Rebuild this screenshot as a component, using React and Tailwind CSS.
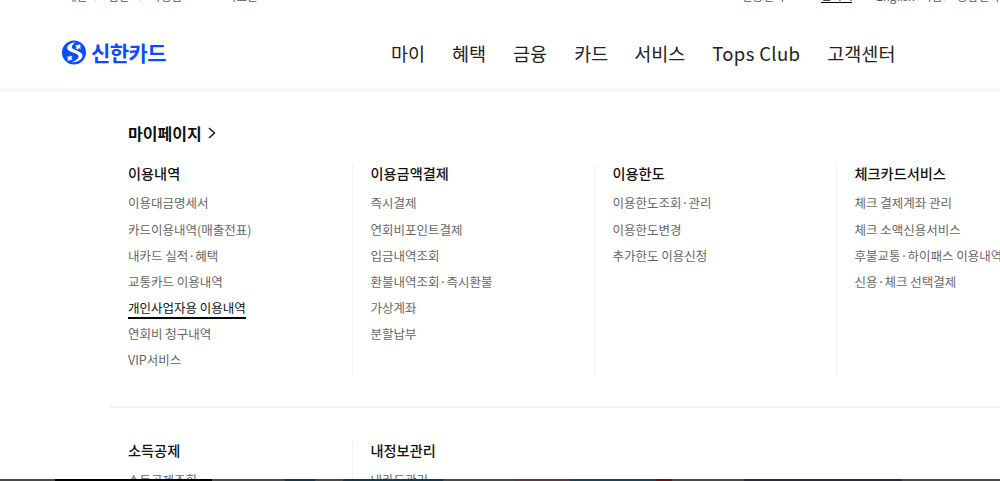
const font = { fontFamily: '"Noto Sans CJK KR", "Noto Sans", sans-serif' };

const columns = [
  { title: "이용내역", items: ["이용대금명세서", "카드이용내역(매출전표)", "내카드 실적·혜택", "교통카드 이용내역", "개인사업자용 이용내역", "연회비 청구내역", "VIP서비스"] },
  { title: "이용금액결제", items: ["즉시결제", "연회비포인트결제", "입금내역조회", "환불내역조회·즉시환불", "가상계좌", "분할납부"] },
  { title: "이용한도", items: ["이용한도조회·관리", "이용한도변경", "추가한도 이용신청"] },
  { title: "체크카드서비스", items: ["체크 결제계좌 관리", "체크 소액신용서비스", "후불교통·하이패스 이용내역", "신용·체크 선택결제"] },
];

function Column({ c, first }) {
  return (
    <div className={`w-[242px] shrink-0 h-[212px] ${first ? "pl-[18px]" : "pl-[17.5px] border-l border-[#f0f0f0]"}`}>
      <h3 className="text-[14.2px] leading-[20px] font-medium text-[#111] whitespace-nowrap -mt-[1px]">{c.title}</h3>
      <ul className="mt-[7.6px] flex flex-col">
        {c.items.map((t) => (
          <li key={t} className="h-[26.2px] flex items-center text-[12.5px] text-[#666] whitespace-nowrap">
            {t === "개인사업자용 이용내역" ? (
              <span className="text-[#111] border-b-2 border-black leading-[18px] mt-[2px]">{t}</span>
            ) : t}
          </li>
        ))}
      </ul>
    </div>
  );
}

function Logo() {
  return (
    <svg width="24" height="25" viewBox="0 0 24 25" className="shrink-0">
      <circle cx="12" cy="12.5" r="12" fill="#0a4cff" />
      <path d="M13.5 2.2C8.5 2.6 5 5 5.2 8.2c.3 4.4 11 4.3 11.3 8 .2 2.7-3.6 5-7 6 5.6.4 11-2.4 11-6.6 0-5-10.3-5.4-10.6-8.2-.2-2 1.8-4 3.6-5.2z" fill="#fff" />
      <path d="M13.6 8.2l1.2-1.3-1.6-1.5 5-1.2.4 5-1.6-1.3-1.2 1.5z" fill="#fff" />
      <path d="M10.4 16.8l-1.2 1.3 1.6 1.5-5 1.2-.4-5 1.6 1.3 1.2-1.5z" fill="#fff" />
    </svg>
  );
}

function Sep() {
  return <span className="w-px h-[12px] bg-[#ddd] self-center" />;
}

export default function App() {
  return (
    <div style={font} className="relative w-[1000px] h-[481px] overflow-hidden bg-white">
      <div className="h-[5px] overflow-hidden">
        <div className="flex justify-between pl-[66px] text-[11.5px] leading-[14px] text-[#555] -mt-[12px] whitespace-nowrap">
          <div className="flex items-center">
            <span className="w-[29px]">개인</span><Sep />
            <span className="ml-[12px] w-[32px]">법인</span><Sep />
            <span className="ml-[9px] w-[76px]">가맹점</span>
            <span>카드몰</span>
          </div>
          <div className="flex items-center w-[258px]">
            <span className="w-[64px]">인증센터</span>
            <span className="w-[15px] text-[#aaa]">◦</span>
            <span className="w-[31px] text-[#111] border-b border-black">한국어</span>
            <span className="ml-[13px]"><Sep /></span>
            <span className="ml-[11px] w-[45px]">English</span>
            <span className="w-[23px]">지점</span><Sep />
            <span className="ml-[12px]">상담센터</span>
          </div>
        </div>
      </div>

      <header className="h-[83px] flex items-center pl-[62px] pt-[12px]">
        <div className="flex items-center gap-[5px] w-[329px]">
          <Logo />
          <span className="text-[21px] font-bold text-[#0a4cff] tracking-[-0.6px] leading-none">신한카드</span>
        </div>
        <nav className="flex gap-[27px] text-[18.5px] text-[#222] whitespace-nowrap mt-[2px]">
          <span>마이</span><span>혜택</span><span>금융</span><span>카드</span><span className="-ml-[1px]">서비스</span><span className="tracking-[0.35px]">Tops Club</span><span>고객센터</span>
        </nav>
      </header>

      <div className="h-[4px] bg-[#f4f7fb]" />

      <main className="pl-[110px]">
        <h2 className="pt-[29px] pl-[18px] h-[72px] flex items-start gap-[6px] text-[16px] leading-[24px] font-bold text-[#111]">
          마이페이지
          <svg width="8" height="12" viewBox="0 0 8 12" className="mt-[6px]"><path d="M1 1l5.5 5L1 11" fill="none" stroke="#111" strokeWidth="1.4" /></svg>
        </h2>
        <div className="flex">
          {columns.map((c, i) => <Column key={c.title} c={c} first={i === 0} />)}
        </div>
        <div className="mt-[30px] h-[2px] bg-[#f0f0f0] w-[900px]" />
        <div className="flex mt-[33px]">
          <Column first c={{ title: "소득공제", items: ["소득공제조회"] }} />
          <Column c={{ title: "내정보관리", items: ["내카드관리"] }} />
        </div>
      </main>

      <div className="absolute left-0 right-0 bottom-0 h-[2px] flex bg-[#4a4a4a]">
        <div className="ml-[55px] w-[157px] bg-black" />
        <div className="ml-[73px] w-[30px] bg-[#17384a]" />
        <div className="ml-[28px] w-[100px] bg-[#17384a]" />
        <div className="ml-[72px] w-[55px] bg-[#5a3a45]" />
        <div className="w-[86px] bg-[#1d4258]" />
        <div className="w-[16px] bg-[#6b0f18]" />
        <div className="ml-[72px] w-[158px] bg-[#2e2a3a]" />
      </div>
    </div>
  );
}
